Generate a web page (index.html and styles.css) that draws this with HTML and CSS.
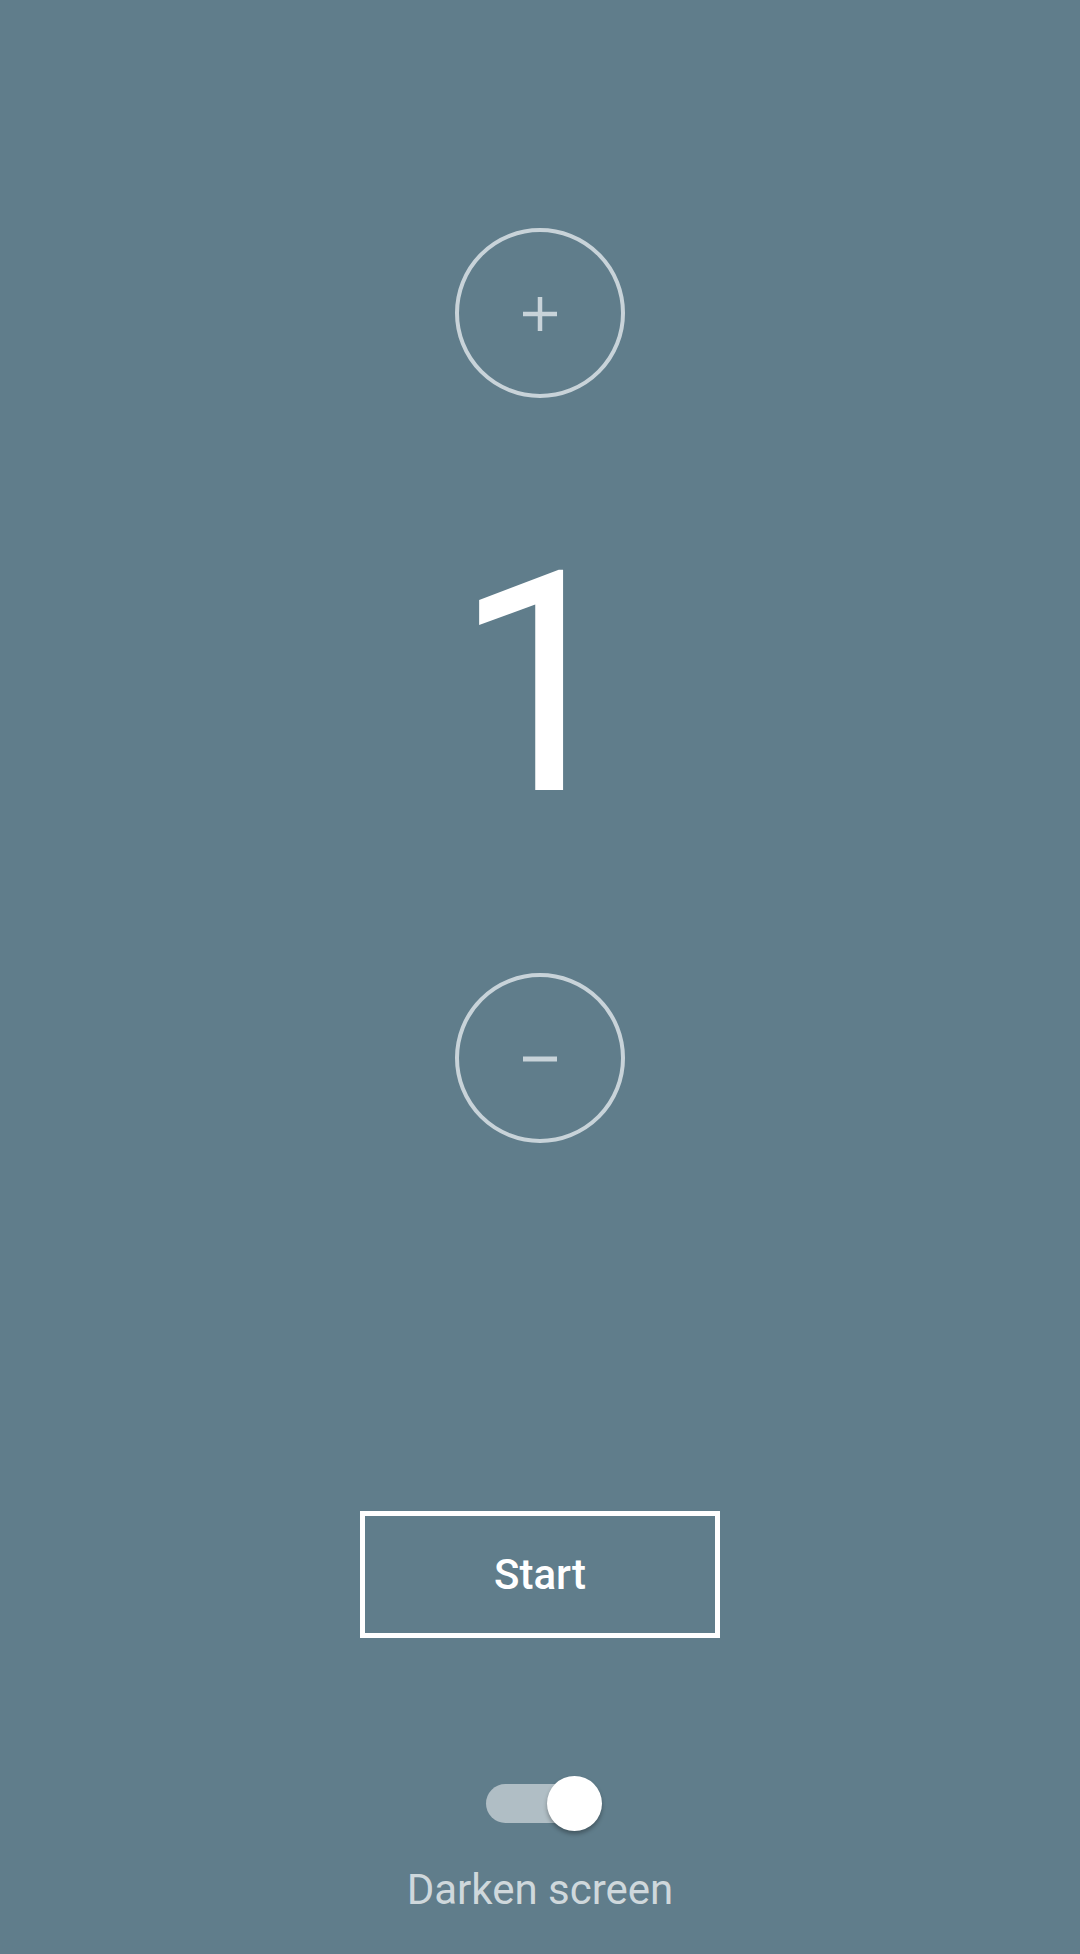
FILE: index.html
```html
<!DOCTYPE html>
<html lang="en">
<head>
<meta charset="utf-8">
<title>Counter</title>
<link rel="stylesheet" href="styles.css">
</head>
<body>
<main class="app">
  <button class="round-btn plus" aria-label="Increase">
    <svg width="36" height="36" viewBox="0 0 36 36"><path d="M18 1v34M1 18h34" stroke="#c8d3d9" stroke-width="4.5" fill="none"/></svg>
  </button>
  <div class="count">1</div>
  <button class="round-btn minus" aria-label="Decrease">
    <svg width="36" height="36" viewBox="0 0 36 36"><path d="M1 18h34" stroke="#c8d3d9" stroke-width="5" fill="none"/></svg>
  </button>
  <button class="start">Start</button>
  <div class="switch" role="switch" aria-checked="true">
    <span class="track"></span>
    <span class="thumb"></span>
  </div>
  <div class="label">Darken screen</div>
</main>
</body>
</html>
```
FILE: styles.css
```css
html, body {
  margin: 0;
  padding: 0;
}
body {
  background: #607d8b;
  width: 1080px;
  height: 1954px;
  overflow: hidden;
  font-family: Roboto, "Liberation Sans", sans-serif;
}
.app {
  display: flex;
  flex-direction: column;
  align-items: center;
  padding-top: 228px;
}
.round-btn {
  width: 170px;
  height: 170px;
  box-sizing: border-box;
  border: 4px solid #c8d3d9;
  border-radius: 50%;
  background: transparent;
  padding: 0;
  display: flex;
  align-items: center;
  justify-content: center;
}
.plus svg {
  margin-top: 2px;
}
.minus svg {
  margin-top: 2px;
}
.count {
  margin-top: 133px;
  font-size: 308px;
  line-height: 308px;
  height: 308px;
  color: #ffffff;
  font-weight: 400;
}
.minus {
  margin-top: 134px;
}
.start {
  margin-top: 368px;
  width: 360px;
  height: 127px;
  box-sizing: border-box;
  border: 5px solid #ffffff;
  background: transparent;
  color: #ffffff;
  font-family: Roboto, "Liberation Sans", sans-serif;
  font-weight: 500;
  font-size: 42px;
  padding: 0;
}
.switch {
  margin-top: 138px;
  margin-left: 8px;
  position: relative;
  width: 116px;
  height: 55px;
}
.track {
  position: absolute;
  left: 0;
  top: 8px;
  width: 94px;
  height: 39px;
  border-radius: 20px;
  background: #b0bec5;
}
.thumb {
  position: absolute;
  left: 61px;
  top: 0;
  width: 55px;
  height: 55px;
  border-radius: 50%;
  background: #ffffff;
  box-shadow: 0 3px 4px rgba(0, 0, 0, 0.3);
}
.label {
  margin-top: 38px;
  font-size: 42px;
  line-height: 42px;
  color: #cfd8dc;
}
```
